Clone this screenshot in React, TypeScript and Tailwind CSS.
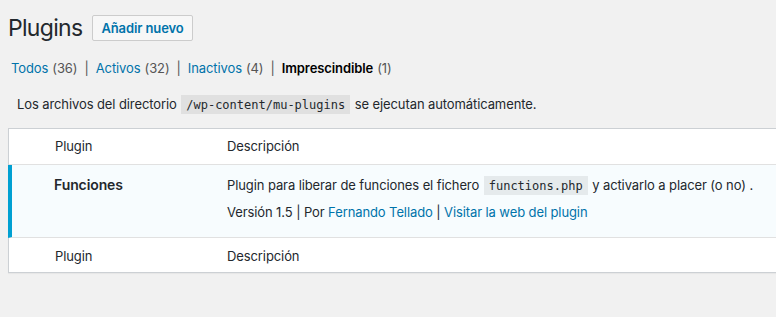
import React from "react";

function Code({ children }: { children: React.ReactNode }) {
  return (
    <code className="bg-[rgba(0,0,0,0.07)] px-[5px] pt-[3px] pb-[2px] mx-[1px] text-[12px] tracking-normal text-[#23282d] [font-family:'DejaVu_Sans_Mono',monospace]">
      {children}
    </code>
  );
}

export default function App() {
  return (
    <div className="w-[776px] h-[317px] overflow-hidden bg-[#f1f1f1] text-[#23282d] text-[13px] tracking-[-0.1px] [font-family:Inter,'Noto_Sans',sans-serif]">
      <div className="flex items-center pl-[8px] pt-[15px] h-[41px]">
        <h1 className="text-[23px] leading-[26px] font-normal text-[#23282d] tracking-[-0.7px]">Plugins</h1>
        <button className="ml-[10px] h-[26px] px-[8px] border border-[#ccc] bg-[#f7f7f7] rounded-[2px] text-[13px] font-semibold text-[#0073aa] leading-[24px]">
          Añadir nuevo
        </button>
      </div>

      <div className="flex items-center pl-[11px] mt-[20px] h-[16px] text-[13px] text-[#555]">
        <span className="text-[#0073aa]">Todos</span>
        <span className="ml-[4px]">(36)</span>
        <span className="mx-[7px]">|</span>
        <span className="text-[#0073aa]">Activos</span>
        <span className="ml-[4px]">(32)</span>
        <span className="mx-[7px]">|</span>
        <span className="text-[#0073aa]">Inactivos</span>
        <span className="ml-[4px]">(4)</span>
        <span className="mx-[7px]">|</span>
        <span className="font-semibold text-black">Imprescindible</span>
        <span className="ml-[4px]">(1)</span>
      </div>

      <p className="pl-[17px] mt-[17px] h-[20px] leading-[20px] text-[13px]">
        Los archivos del directorio <Code>/wp-content/mu-plugins</Code> se ejecutan automáticamente.
      </p>

      <div className="ml-[8px] mt-[14px] w-[790px] bg-white border border-[#ccd0d4] shadow-[0_1px_1px_rgba(0,0,0,0.04)]">
        <div className="flex h-[36px] items-center border-b border-[#e1e1e1]">
          <div className="w-[218px] pl-[46px]">Plugin</div>
          <div>Descripción</div>
        </div>
        <div className="flex h-[73px] bg-[#f7fcfe] border-b border-[#e1e1e1] border-l-[4px] border-l-[#00a0d2] -ml-px">
          <div className="w-[215px] pl-[42px] pt-[11px] font-semibold text-[14px] text-[#23282d] leading-[18px]">Funciones</div>
          <div className="pt-[10px]">
            <div className="leading-[20px]">
              Plugin para liberar de funciones el fichero <Code>functions.php</Code> y activarlo a placer (o no) .
            </div>
            <div className="mt-[6px] leading-[20px]">
              Versión 1.5 | Por <span className="text-[#0073aa]">Fernando Tellado</span> |{" "}
              <span className="text-[#0073aa]">Visitar la web del plugin</span>
            </div>
          </div>
        </div>
        <div className="flex h-[34px] items-center pt-[3px]">
          <div className="w-[218px] pl-[46px]">Plugin</div>
          <div>Descripción</div>
        </div>
      </div>
    </div>
  );
}
